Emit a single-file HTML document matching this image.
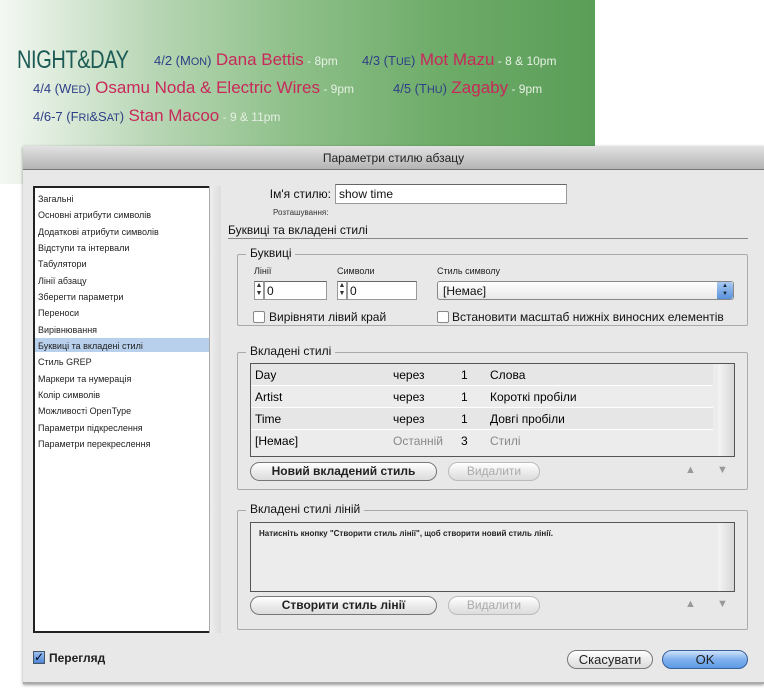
<!DOCTYPE html>
<html><head><meta charset="utf-8"><style>
*{margin:0;padding:0;box-sizing:border-box}
body{width:764px;height:698px;background:#fff;position:relative;overflow:hidden;font-family:"Liberation Sans","DejaVu Sans",sans-serif}
.a{position:absolute;white-space:nowrap}
#banner{position:absolute;left:0;top:0;width:595px;height:184px;background:linear-gradient(90deg,#f4f8f3 0%,#b9d7b6 25%,#8dbf88 50%,#6dab68 75%,#5a9e58 100%)}
.bl{color:#2d3f86}.rd{color:#c8285a}.wh{color:#e6f0e4;font-size:12px}
#dlg{position:absolute;left:23px;top:146px;width:741px;height:538px;background:#e8e8e8;border-bottom:2px solid #aaa;box-shadow:0 1px 3px rgba(0,0,0,.4)}
#title{position:absolute;left:0;top:0;width:741px;height:24px;background:linear-gradient(#e2e2e2,#b4b4b4);border-bottom:1px solid #777;text-align:center;font-size:12px;line-height:24px;color:#222}
.s{font-size:9px;color:#222}
.m{font-size:12px;color:#111}
.inp{position:absolute;background:#fff;border:1px solid #999;border-top-color:#666}
.grp{position:absolute;border:1px solid #aaa;border-radius:2px}
.lg{position:absolute;background:#e8e8e8;padding:0 4px;font-size:12px;top:-9px;left:8px;color:#111}
.btn{position:absolute;height:19px;border:1px solid #777;border-radius:10px;background:linear-gradient(#fff,#ececec 50%,#dcdcdc);font-size:12px;text-align:center;line-height:17px;font-weight:bold;color:#222}
.dis{color:#aaa;border-color:#bbb;font-weight:normal}
.cb{position:absolute;width:12px;height:12px;border:1px solid #888;background:#fff;border-radius:2px}
.row{position:absolute;left:0;width:462px;height:22px;font-size:12px;line-height:22px;border-bottom:1px solid #fff}
.row span{position:absolute}
</style></head><body>
<div id="banner"></div>
<div class="a" style="left:17px;top:46px;font-size:25px;color:#1c5a55;letter-spacing:-0.5px;transform:scaleX(0.8);transform-origin:left top">NIGHT&amp;DAY</div>
<div class="a" style="left:154px;top:50px;font-size:16px"><span class="bl" style="font-size:13px">4/2 (M<small>ON</small>)</span> <span class="rd" style="font-size:17px">Dana Bettis</span><span class="wh"> - 8pm</span></div>
<div class="a" style="left:362px;top:50px;font-size:16px"><span class="bl" style="font-size:13px">4/3 (T<small>UE</small>)</span> <span class="rd" style="font-size:17px">Mot Mazu</span><span class="wh"> - 8 &amp; 10pm</span></div>
<div class="a" style="left:33px;top:78px"><span class="bl" style="font-size:13px">4/4 (W<small>ED</small>)</span> <span class="rd" style="font-size:17px">Osamu Noda &amp; Electric Wires</span><span class="wh"> - 9pm</span></div>
<div class="a" style="left:393px;top:78px"><span class="bl" style="font-size:13px">4/5 (T<small>HU</small>)</span> <span class="rd" style="font-size:17px">Zagaby</span><span class="wh"> - 9pm</span></div>
<div class="a" style="left:33px;top:106px"><span class="bl" style="font-size:13px">4/6-7 (F<small>RI</small>&amp;S<small>AT</small>)</span> <span class="rd" style="font-size:17px">Stan Macoo</span><span class="wh"> - 9 &amp; 11pm</span></div>

<div id="dlg">
<div id="title">Параметри стилю абзацу</div>
<div style="position:absolute;left:10px;top:40px;width:188px;height:447px;background:#fff;border:2px solid #222;border-right-color:#444"></div>
<div style="position:absolute;left:186px;top:40px;width:12px;height:447px;background:linear-gradient(90deg,#eee,#ddd);border-left:1px solid #aaa"></div>
<div style="position:absolute;left:12px;top:192px;width:174px;height:14px;background:#b9d0ec"></div>
<div class="a s" style="left:15px;top:45px;line-height:16.35px">Загальні<br>Основні атрибути символів<br>Додаткові атрибути символів<br>Відступи та інтервали<br>Табулятори<br>Лінії абзацу<br>Зберегти параметри<br>Переноси<br>Вирівнювання<br>Буквиці та вкладені стилі<br>Стиль GREP<br>Маркери та нумерація<br>Колір символів<br>Можливості OpenType<br>Параметри підкреслення<br>Параметри перекреслення</div>

<div class="a m" style="left:200px;width:108px;text-align:right;top:41px">Ім'я стилю:</div>
<div class="inp" style="left:312px;top:38px;width:232px;height:20px"><span class="a m" style="left:3px;top:2px">show time</span></div>
<div class="a" style="left:250px;top:62px;font-size:8px;color:#333">Розташування:</div>
<div class="a m" style="left:205px;top:77px">Буквиці та вкладені стилі</div>
<div style="position:absolute;left:205px;top:92px;width:520px;border-top:1px solid #888"></div>

<div class="grp" style="left:214px;top:108px;width:511px;height:72px"><div class="lg">Буквиці</div></div>
<div class="a s" style="left:231px;top:120px">Лінії</div>
<div class="a s" style="left:314px;top:120px">Символи</div>
<div class="a s" style="left:414px;top:120px">Стиль символу</div>
<div class="inp" style="left:231px;top:135px;width:10px;height:19px;font-size:7px;line-height:8px;text-align:center;color:#333">▲<br>▼</div>
<div class="inp" style="left:241px;top:135px;width:63px;height:19px"><span class="a m" style="left:2px;top:2px">0</span></div>
<div class="inp" style="left:314px;top:135px;width:10px;height:19px;font-size:7px;line-height:8px;text-align:center;color:#333">▲<br>▼</div>
<div class="inp" style="left:324px;top:135px;width:70px;height:19px"><span class="a m" style="left:2px;top:2px">0</span></div>
<div style="position:absolute;left:414px;top:135px;width:297px;height:19px;border:1px solid #888;border-radius:3px;background:linear-gradient(#fff,#e8e8e8)"><span class="a m" style="left:5px;top:2px">[Немає]</span><div style="position:absolute;right:0;top:0;width:16px;height:17px;background:linear-gradient(#a9c9f0,#5a92dc);border-radius:0 3px 3px 0;font-size:6px;line-height:8px;text-align:center;color:#123">▲<br>▼</div></div>
<div class="cb" style="left:230px;top:165px"></div><div class="a m" style="left:246px;top:164px">Вирівняти лівий край</div>
<div class="cb" style="left:414px;top:165px"></div><div class="a m" style="left:429px;top:164px">Встановити масштаб нижніх виносних елементів</div>

<div class="grp" style="left:214px;top:206px;width:511px;height:138px"><div class="lg">Вкладені стилі</div></div>
<div style="position:absolute;left:227px;top:217px;width:485px;height:94px;border:1px solid #555;background:#ececec;overflow:hidden">
<div class="row" style="top:0;background:#e6e6e6"><span style="left:4px">Day</span><span style="left:142px">через</span><span style="left:210px">1</span><span style="left:239px">Слова</span></div>
<div class="row" style="top:22px;background:#ececec"><span style="left:4px">Artist</span><span style="left:142px">через</span><span style="left:210px">1</span><span style="left:239px">Короткі пробіли</span></div>
<div class="row" style="top:44px;background:#e6e6e6"><span style="left:4px">Time</span><span style="left:142px">через</span><span style="left:210px">1</span><span style="left:239px">Довгі пробіли</span></div>
<div class="row" style="top:66px;background:#ececec;border:none"><span style="left:4px">[Немає]</span><span style="left:142px;color:#888">Останній</span><span style="left:210px">3</span><span style="left:239px;color:#888">Стилі</span></div>
<div style="position:absolute;right:0;top:0;width:16px;height:94px;background:linear-gradient(90deg,#f4f4f4,#d8d8d8)"></div>
</div>
<div class="btn" style="left:227px;top:316px;width:187px">Новий вкладений стиль</div>
<div class="btn dis" style="left:425px;top:316px;width:92px">Видалити</div>
<div class="a" style="left:662px;top:318px;font-size:11px;color:#999">▲</div>
<div class="a" style="left:694px;top:318px;font-size:11px;color:#999">▼</div>

<div class="grp" style="left:214px;top:364px;width:511px;height:120px"><div class="lg">Вкладені стилі ліній</div></div>
<div style="position:absolute;left:227px;top:376px;width:485px;height:70px;border:1px solid #555;background:#ececec"><span class="a" style="left:8px;top:6px;font-size:8px;font-weight:bold;color:#222">Натисніть кнопку "Створити стиль лінії", щоб створити новий стиль лінії.</span><div style="position:absolute;right:0;top:0;width:16px;height:68px;background:linear-gradient(90deg,#f4f4f4,#d8d8d8)"></div></div>
<div class="btn" style="left:227px;top:450px;width:187px">Створити стиль лінії</div>
<div class="btn dis" style="left:425px;top:450px;width:92px">Видалити</div>
<div class="a" style="left:662px;top:452px;font-size:11px;color:#999">▲</div>
<div class="a" style="left:694px;top:452px;font-size:11px;color:#999">▼</div>

<div style="position:absolute;left:10px;top:505px;width:12px;height:13px;background:linear-gradient(#9cc0ee,#4b84d4);border:1px solid #456;color:#002;font-size:12px;line-height:11px;text-align:center;font-weight:bold">✓</div>
<div class="a m" style="left:26px;top:505px;font-weight:bold;color:#222">Перегляд</div>
<div class="btn" style="left:544px;top:504px;width:86px;font-weight:normal;font-size:13px">Скасувати</div>
<div class="btn" style="left:639px;top:504px;width:86px;font-weight:normal;font-size:13px;background:linear-gradient(#cfe3fb,#7fb0ec 50%,#5d9be6);border-color:#3a5f99">OK</div>
</div>
</body></html>
